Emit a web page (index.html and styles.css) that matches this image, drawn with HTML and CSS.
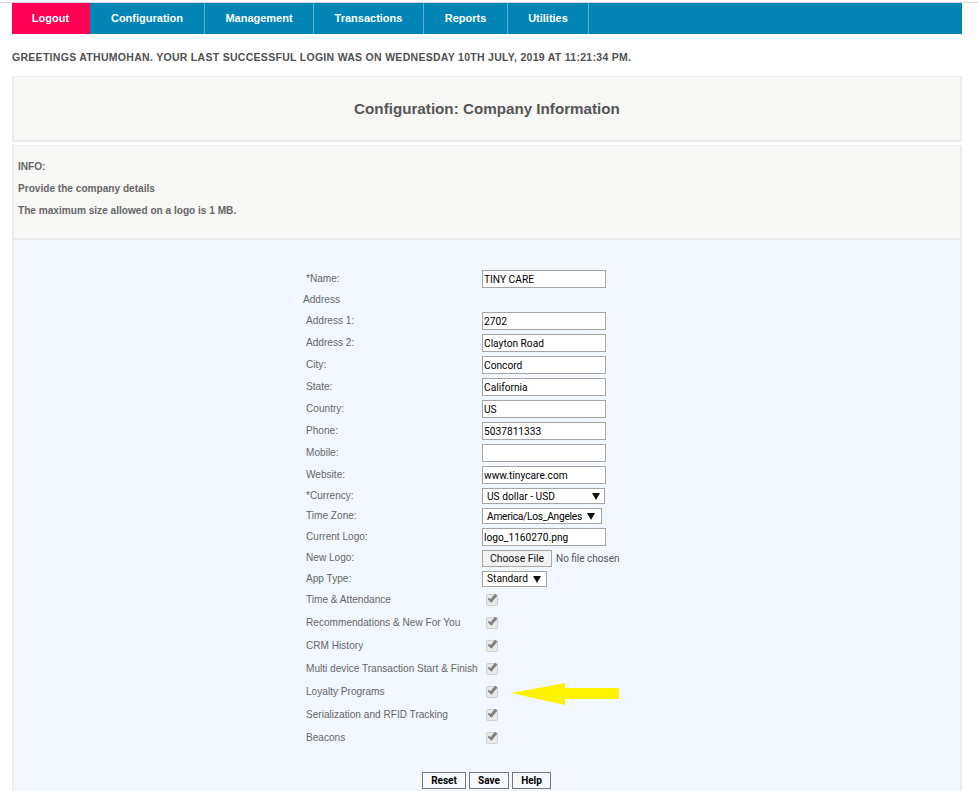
FILE: index.html
```html
<!DOCTYPE html>
<html lang="en">
<head>
<meta charset="utf-8">
<title>Configuration: Company Information</title>
<link rel="stylesheet" href="styles.css">
</head>
<body>
<div class="topline"></div>
<div class="page">
  <nav class="nav">
    <a class="nav-item logout">Logout</a>
    <a class="nav-item config">Configuration</a>
    <a class="nav-item manage">Management</a>
    <a class="nav-item trans">Transactions</a>
    <a class="nav-item reports">Reports</a>
    <a class="nav-item utils">Utilities</a>
  </nav>
  <p class="greeting">GREETINGS ATHUMOHAN. YOUR LAST SUCCESSFUL LOGIN WAS ON WEDNESDAY 10TH JULY, 2019 AT 11:21:34 PM.</p>
  <header class="title-panel"><h1>Configuration: Company Information</h1></header>
  <section class="info-panel">
    <p>INFO:</p>
    <p>Provide the company details</p>
    <p>The maximum size allowed on a logo is 1 MB.</p>
  </section>
  <form class="form-panel">
    <div class="row"><label>*Name:</label><input class="text" type="text" value="TINY CARE"></div>
    <div class="row short"><label class="heading">Address</label></div>
    <div class="row"><label>Address 1:</label><input class="text" type="text" value="2702"></div>
    <div class="row"><label>Address 2:</label><input class="text" type="text" value="Clayton Road"></div>
    <div class="row"><label>City:</label><input class="text" type="text" value="Concord"></div>
    <div class="row"><label>State:</label><input class="text" type="text" value="California"></div>
    <div class="row"><label>Country:</label><input class="text" type="text" value="US"></div>
    <div class="row"><label>Phone:</label><input class="text" type="text" value="5037811333"></div>
    <div class="row"><label>Mobile:</label><input class="text" type="text" value=""></div>
    <div class="row"><label>Website:</label><input class="text" type="text" value="www.tinycare.com"></div>
    <div class="row short"><label>*Currency:</label><span class="select-wrap currency"><select><option>US dollar - USD</option></select></span></div>
    <div class="row short"><label>Time Zone:</label><span class="select-wrap zone"><select><option>America/Los_Angeles</option></select></span></div>
    <div class="row"><label>Current Logo:</label><input class="text" type="text" value="logo_1160270.png"></div>
    <div class="row file-row"><label>New Logo:</label><span class="file"><button class="choose" type="button">Choose File</button><span class="no-file">No file chosen</span></span></div>
    <div class="row app-row"><label>App Type:</label><span class="select-wrap app"><select><option>Standard</option></select></span></div>
    <div class="row check"><label>Time &amp; Attendance</label><input type="checkbox" checked disabled></div>
    <div class="row check"><label>Recommendations &amp; New For You</label><input type="checkbox" checked disabled></div>
    <div class="row check"><label>CRM History</label><input type="checkbox" checked disabled></div>
    <div class="row check"><label>Multi device Transaction Start &amp; Finish</label><input type="checkbox" checked disabled></div>
    <div class="row check"><label>Loyalty Programs</label><input type="checkbox" checked disabled></div>
    <div class="row check"><label>Serialization and RFID Tracking</label><input type="checkbox" checked disabled></div>
    <div class="row check"><label>Beacons</label><input type="checkbox" checked disabled></div>
    <div class="actions">
      <button class="btn reset" type="button">Reset</button>
      <button class="btn save" type="button">Save</button>
      <button class="btn help" type="button">Help</button>
    </div>
    <svg class="arrow" width="110" height="24" viewBox="0 0 110 24" aria-hidden="true"><polygon points="0,11 54,1 54,6 108,6 108,17 54,17 54,23" fill="#fff200"/></svg>
  </form>
</div>
</body>
</html>
```
FILE: styles.css
```css
html, body { margin: 0; padding: 0; background: #fff; overflow: hidden; height: 791px; }
body { font-family: "Liberation Sans", Arial, sans-serif; color: #555; }
.topline { height: 1px; margin-top: 2px; background: #d6d6e0; }
.page { margin: 0 16px 0 12px; }

.nav { display: flex; height: 31px; background: #0085b5; }
.nav-item { box-sizing: border-box; display: flex; align-items: center; justify-content: center; height: 31px; padding-bottom: 2px; color: #fff; font-size: 11px; font-weight: bold; border-right: 1px solid #5fb0cf; }
.logout { width: 78px; background: #ff0055; border-right-color: #ff0055; }
.config { width: 115px; }
.manage { width: 109px; }
.trans { width: 110px; }
.reports { width: 84px; }
.utils { width: 81px; }

.greeting { margin: 0; height: 42px; line-height: 46px; font-size: 10.5px; font-weight: bold; color: #505050; white-space: nowrap; letter-spacing: .29px; }

.title-panel { box-sizing: border-box; height: 66px; display: flex; align-items: center; justify-content: center; background: #f7f7f5; border: 2px solid #ececec; border-top-width: 1px; }
.title-panel h1 { margin: 0; font-size: 15.2px; font-weight: bold; color: #555; }

.info-panel { box-sizing: border-box; height: 95px; margin-top: 3px; padding: 10px 4px 0; background: #f7f7f5; border: 2px solid #ececec; border-top-width: 1px; }
.info-panel p { margin: 0; height: 22px; line-height: 22px; font-size: 10.1px; font-weight: bold; color: #666; }

.form-panel { position: relative; box-sizing: border-box; height: 560px; padding: 28px 0 0 292px; background: #f2f7fe; border: 2px solid #ececec; border-top: 0; }
.row { display: flex; align-items: center; height: 22px; font-size: 10.1px; color: #666; }
.row label { box-sizing: border-box; flex: 0 0 176px; padding-bottom: 2px; white-space: nowrap; }
.row.short { height: 20px; }
.row .heading { margin-left: -3px; }
.row.file-row { height: 21px; }
.row.app-row { height: 19px; }
.row.app-row label { padding-bottom: 0; }
.row.check { height: 23px; }
.row.check label { padding-bottom: 0; }

.text { box-sizing: border-box; width: 124px; height: 18px; margin: 0; padding: 0 1px; border: 1px solid #a5a5a5; border-radius: 0; background: #fff; color: #000; font: 10.2px Roboto, Tahoma, sans-serif; }

.select-wrap { position: relative; display: block; height: 16px; }
.select-wrap select { box-sizing: border-box; display: block; width: 100%; height: 16px; margin: 0; padding: 0 0 0 4px; appearance: none; border: 1px solid #a5a5a5; border-radius: 0; background: #fff; color: #000; font: 10.2px Roboto, Tahoma, sans-serif; }
.select-wrap::after { content: ""; position: absolute; top: 5px; border-left: 4px solid transparent; border-right: 4px solid transparent; border-top: 7px solid #111; }
.currency { width: 123px; }
.currency::after { right: 5px; }
.zone { width: 120px; }
.zone::after { right: 7px; }
.zone select { letter-spacing: -.25px; }
.app { width: 65px; }
.app::after { right: 6px; }

.file { display: flex; align-items: center; }
.choose { box-sizing: border-box; width: 70px; height: 17px; margin: 0; padding: 0; border: 1px solid #a5a5a5; border-radius: 0; background: #f2f2f2; color: #111; font: 10.4px Roboto, Tahoma, sans-serif; }
.no-file { margin-left: 4px; font: 10px Roboto, Tahoma, sans-serif; color: #555; }

.check input { position: relative; box-sizing: border-box; appearance: none; margin: 0 0 0 4px; width: 12px; height: 12px; border: 1px solid #cfcfcf; border-radius: 2px; background: #e9e9e9; }
.check input::before { content: ""; position: absolute; left: 3px; top: -2px; width: 5px; height: 9px; box-sizing: border-box; border-right: 3px solid #808080; border-bottom: 2px solid #808080; transform: rotate(40deg); }

.actions { display: flex; gap: 3px; margin: 23px 0 0 116px; }
.btn { box-sizing: border-box; height: 17px; margin: 0; padding: 0; border: 1px solid #777; border-radius: 0; background: #f5f8fc; color: #000; font: bold 10px Roboto, Tahoma, sans-serif; }
.reset { width: 44px; }
.save { width: 40px; }
.help { width: 39px; }

.arrow { position: absolute; left: 497px; top: 442px; }
```
